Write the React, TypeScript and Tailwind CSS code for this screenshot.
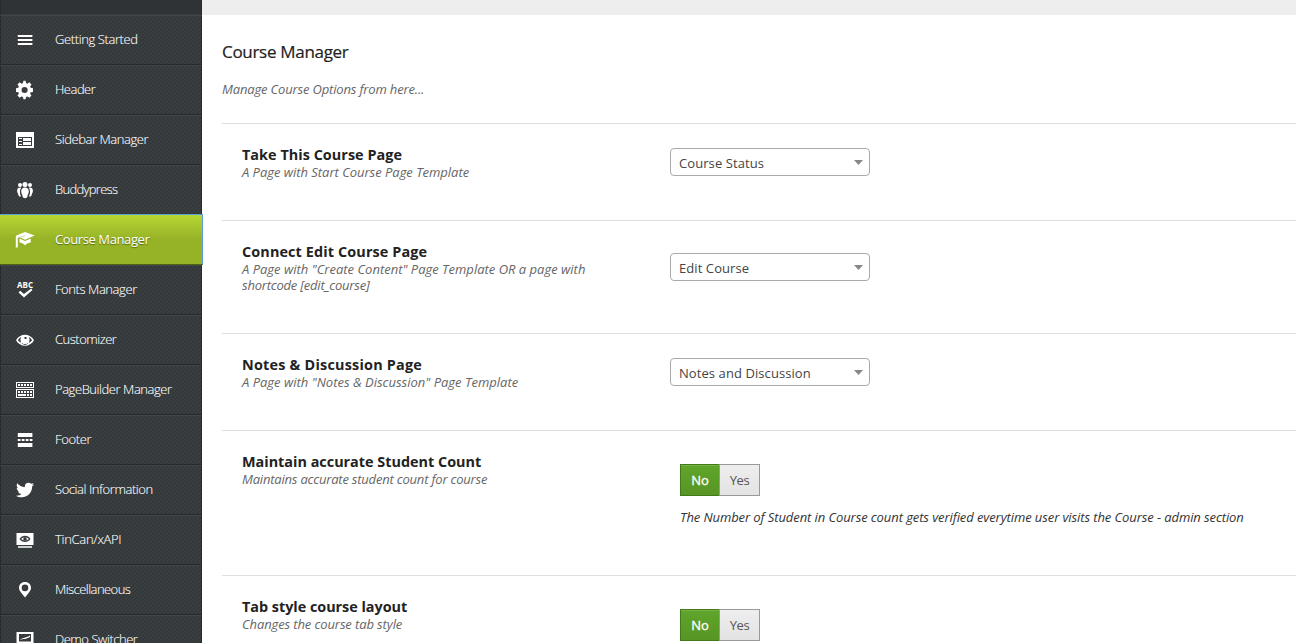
import React from "react";
import { FaTwitter } from "react-icons/fa";

const Svg = ({ children }: { children: React.ReactNode }) => (
  <svg viewBox="0 0 20 20" className="block h-5 w-5" fill="currentColor">
    {children}
  </svg>
);

const D = "#353a3d";

const icons: Record<string, React.ReactNode> = {
  menu: (
    <Svg>
      <path d="M2.800 5h14.600v2H2.800zM2.800 9h14.600v2H2.800zM2.800 13h14.600v2H2.800z" />
    </Svg>
  ),
  gear: (
    <Svg>
      <path
        fillRule="evenodd"
        d="M18 11.9V8.2l-2.3-.4-.6-1.4 1.4-1.9-2.2-2.2-1.9 1.4-1.4-.6-.4-2.3H8.4L8 3.1l-1.4.6-1.9-1.4-2.2 2.2 1.4 1.9-.6 1.4-2.3.4v3.7l2.3.4.6 1.4-1.4 1.900 2.200 2.200 1.900-1.400 1.400.6.4 2.300h2.200l.4-2.300 1.400-.6 1.900 1.400 2.200-2.200-1.400-1.900.6-1.400zM9.600 13.100a3 3 0 1 1 0-6.100 3 3 0 0 1 0 6.100z"
      />
    </Svg>
  ),
  sidebar: (
    <Svg>
      <path fillRule="evenodd" d="M1 2h18v16H1zM3 7v9h14V7z" />
      <path d="M4 8h3v1H4zM4 11h3v1H4zM4 14h3v1H4zM8 8h8v3H8zM8 12h8v3H8z" />
    </Svg>
  ),
  people: (
    <Svg>
      <circle cx="5" cy="5" r="2" />
      <circle cx="15" cy="5" r="2" />
      <circle cx="10" cy="4.6" r="2.5" />
      <path d="M5 7.4c-2 0-3 1.5-2.9 3.3.1 2 .8 2.7 1.2 4 .2 1.2 1 1.9 2.2 1.9l.6-.2C4.500 13.500 4.500 10 6.200 7.700zM15 7.400c2 0 3 1.500 2.900 3.300-.1 2-.8 2.700-1.200 4-.2 1.200-1 1.900-2.200 1.900l-.6-.2c1.600-2.900 1.600-6.400-.1-8.700z" />
      <path d="M10 7.500c-2.700 0-3.900 1.900-3.800 4.100.1 2.300 1.100 2.700 1.300 4.400.2 1.500 1.200 2.200 2.500 2.200s2.300-.7 2.500-2.200c.2-1.700 1.200-2.100 1.300-4.400.1-2.200-1.100-4.100-3.800-4.100z" />
    </Svg>
  ),
  course: (
    <Svg>
      <path d="M10 2 19.700 5.400 10 9.800 4.300 7.300 2.800 7.700v9.800H.8V7.300L1.200 5.600z" />
      <path d="M4.500 8.500 10 11l5.700-2.500v4.100C14 12.700 12 13.500 10 15.200 8 13.500 6.500 12.800 4.500 12.600z" />
      <path d="m4.500 7.300 5.500-1.400" stroke="#b4c46e" strokeWidth=".6" />
    </Svg>
  ),
  fonts: (
    <Svg>
      <text x="10" y="8" textAnchor="middle" className="font-['Open_Sans'] text-[8px] font-bold" textLength="16">
        ABC
      </text>
      <path d="m3.500 12.500 1.700-1.700 3.700 3.200 7.300-5.600 1.300 1.600L9 17.500z" />
    </Svg>
  ),
  eye: (
    <Svg>
      <path
        fillRule="evenodd"
        d="M1 10.200C5 2.800 15 2.800 19 10.200c-4 7.300-14 7.300-18 0zm2 0c3 4.600 11 4.600 14 0-1-1.600-2-2.500-3.300-3.200a5 5 0 0 1-3.700 8 5 5 0 0 1-3.700-8C5 7.700 3.900 8.600 3 10.200z"
      />
      <circle cx="10" cy="9.700" r="4.200" />
      <rect x="9.500" y="7" width="2" height="2" fill={D} />
    </Svg>
  ),
  builder: (
    <Svg>
      <path fillRule="evenodd" d="M1 2h18v6H1zM2 3v4h16V3zM1 9h18v9H1zM2 10v7h16v-7z" />
      <path d="M3 4h2v2H3zM6 4h2v2H6zM9 4h2v2H9zM12 4h2v2h-2zM15 4h2v2h-2zM3 11h2v2H3zM6 11h2v2H6zM9 11h2v2H9zM12 11h2v2h-2zM15 11h2v2h-2zM3 14h8v2H3zM12 14h2v2h-2zM15 14h2v2h-2z" />
    </Svg>
  ),
  footer: (
    <Svg>
      <path d="M2.800 3h14.600v4H2.800zM2.800 9h2.700v2H2.800zM6.700 9h2.800v2H6.700zM10.700 9h2.800v2h-2.800zM14.700 9h2.700v2h-2.700zM2.800 13h14.600v4H2.800z" />
    </Svg>
  ),
  twitter: <FaTwitter className="mt-px ml-px h-[18px] w-[18px]" />,
  tincan: (
    <Svg>
      <path d="M1.500 3h17v12h-17zM3 16.200h14v1.600H3z" />
      <path d="M4.500 9C7 4.800 13 4.800 15.500 9c-2.500 4-8.500 4-11 0z" fill={D} />
      <path d="M6.200 9c1.200-1.900 6.400-1.900 7.600 0-1.200 1.900-6.400 1.900-7.600 0z" />
      <circle cx="10" cy="9" r="1.800" fill={D} />
    </Svg>
  ),
  pin: (
    <Svg>
      <path
        fillRule="evenodd"
        d="M10 2C6.200 2 4 4.700 4 7.800c0 1.800.8 3.100 2 4.700l4 5 4-5c1.200-1.600 2-2.900 2-4.700C16 4.700 13.800 2 10 2zm0 9.200a3.300 3.300 0 1 1 0-6.600 3.300 3.300 0 0 1 0 6.600z"
      />
    </Svg>
  ),
  demo: (
    <Svg>
      <path fillRule="evenodd" d="M1.500 2h17v13h-17zM4 4v7.500h12V4z" />
      <path d="M5 10C7 7.500 10 8.500 15 5.500V7C11 9.500 8 8.500 5 10zM4 17h12v1H4z" />
    </Svg>
  ),
};

const nav = [
  { icon: "menu", label: "Getting Started", track: "tracking-[-0.4px]" },
  { icon: "gear", label: "Header", track: "tracking-[-0.5px]" },
  { icon: "sidebar", label: "Sidebar Manager", track: "tracking-[-0.43px]" },
  { icon: "people", label: "Buddypress", track: "tracking-[-0.7px]" },
  { icon: "course", label: "Course Manager", track: "tracking-[-0.4px]", active: true },
  { icon: "fonts", label: "Fonts Manager", track: "tracking-[-0.42px]" },
  { icon: "eye", label: "Customizer", track: "tracking-[-0.5px]" },
  { icon: "builder", label: "PageBuilder Manager", track: "tracking-[-0.44px]" },
  { icon: "footer", label: "Footer", track: "tracking-[-0.35px]" },
  { icon: "twitter", label: "Social Information", track: "tracking-[-0.43px]" },
  { icon: "tincan", label: "TinCan/xAPI", track: "tracking-[-0.3px]" },
  { icon: "pin", label: "Miscellaneous", track: "tracking-[-0.55px]" },
  { icon: "demo", label: "Demo Switcher", track: "tracking-[-0.48px]" },
];

function NavItem({ item }: { item: (typeof nav)[number] }) {
  return (
    <a
      className={
        item.active
          ? "z-10 -mt-px flex h-[51px] w-[203px] shrink-0 items-center border-t border-r border-b border-t-[#5b9dd9] border-r-[#5b9dd9] border-b-[#4f6213] bg-[linear-gradient(to_bottom,#b7d733_0%,#96b227_50%,#96b227_100%)] pl-[15px] font-normal text-white [text-shadow:0_1px_1px_#566b12]"
          : "flex h-[50px] w-[202px] shrink-0 items-center border border-t-[#414649] border-r-[#272b2d] border-b-[#25292b] border-l-[#272b2d] pl-[14px] font-light text-white [-webkit-text-stroke:0.1px_#fff]"
      }
    >
      <span className="h-5 w-5 shrink-0 [-webkit-text-stroke:0]">{icons[item.icon]}</span>
      <span className={"mb-[2px] ml-5 text-[13px] leading-5 whitespace-nowrap " + item.track}>{item.label}</span>
    </a>
  );
}

function Select({ value }: { value: string }) {
  return (
    <div className="flex h-7 w-[200px] items-center justify-between rounded-[4px] border border-[#aaa] bg-white pr-[6px] pl-2 text-[13px] leading-5 tracking-[0.08px] text-[#444]">
      <span className="pt-px">{value}</span>
      <svg width="9" height="5" viewBox="0 0 9 5">
        <path d="M0 0h9L4.500 5z" fill="#888" />
      </svg>
    </div>
  );
}

function Toggle() {
  return (
    <div className="flex h-8 w-20 text-[13px] leading-[31px]">
      <div className="w-[39px] border border-r-0 border-[#437a19] bg-[linear-gradient(to_bottom,#5fa52b,#579524)] text-center font-medium text-white shadow-[inset_0_1px_0_#77b14a] [-webkit-text-stroke:0.3px_#fff]">
        No
      </div>
      <div className="w-[41px] border border-[#999] bg-[linear-gradient(to_bottom,#eee,#e3e3e3)] text-center tracking-[-0.4px] text-[#555]">Yes</div>
    </div>
  );
}

type RowProps = {
  title: string;
  titleTrack: string;
  desc: React.ReactNode;
  descTrack?: string;
  height: string;
  children: React.ReactNode;
};

function Row({ title, titleTrack, desc, descTrack = "", height, children }: RowProps) {
  return (
    <section className={"flex shrink-0 border-t border-[#dfdfdf] pl-5 " + height}>
      <div className="w-[428px] shrink-0 pt-[22px]">
        <h4 className={"text-[14.4px] leading-[18px] font-bold text-[#222] " + titleTrack}>{title}</h4>
        <p className={"text-[13px] leading-4 whitespace-nowrap text-[#666] italic " + descTrack}>{desc}</p>
      </div>
      {children}
    </section>
  );
}

export default function App() {
  return (
    <div className="flex h-[643px] w-[1296px] overflow-hidden bg-white font-['Open_Sans','Noto_Sans',sans-serif]">
      <nav className="flex w-[202px] shrink-0 flex-col bg-[repeating-linear-gradient(135deg,#3b3f41_0px,#3b3f41_1.414px,#323739_1.414px,#323739_2.828px)]">
        <div className="h-[15px] w-[202px] shrink-0 border-r border-b border-l border-[#272b2d] border-b-[#383d40] bg-[#2f3336]" />
        {nav.map((item) => (
          <NavItem key={item.label} item={item} />
        ))}
      </nav>
      <main className="flex min-w-0 flex-1 flex-col">
        <div className="h-[15px] shrink-0 bg-[#eee]" />
        <div className="flex flex-1 flex-col pl-5">
          <header className="h-[108px] shrink-0 pt-[25px]">
            <h3 className="text-[17px] leading-6 font-medium tracking-[-0.3px] text-[#222] [-webkit-text-stroke:0.2px_#222]">Course Manager</h3>
            <p className="mt-[15px] text-[13px] leading-5 tracking-[-0.16px] text-[#666] italic">Manage Course Options from here...</p>
          </header>
          <Row
            height="h-[97px]"
            title="Take This Course Page"
            titleTrack="tracking-[0.04px]"
            desc="A Page with Start Course Page Template"
            descTrack="tracking-[-0.03px]"
          >
            <div className="pt-6">
              <Select value="Course Status" />
            </div>
          </Row>
          <Row
            height="h-[113px]"
            title="Connect Edit Course Page"
            titleTrack="tracking-[0.12px]"
            desc={
              <>
                A Page with "Create Content" Page Template OR a page with
                <br />
                <span className="tracking-[-0.22px]">shortcode [edit_course]</span>
              </>
            }
          >
            <div className="pt-8">
              <Select value="Edit Course" />
            </div>
          </Row>
          <Row
            height="h-[97px]"
            title="Notes & Discussion Page"
            titleTrack="tracking-[0.22px]"
            desc={'A Page with "Notes & Discussion" Page Template'}
          >
            <div className="pt-6">
              <Select value="Notes and Discussion" />
            </div>
          </Row>
          <Row
            height="h-[145px]"
            title="Maintain accurate Student Count"
            titleTrack=""
            desc="Maintains accurate student count for course"
            descTrack="tracking-[-0.2px]"
          >
            <div className="pt-[33px] pl-[10px]">
              <Toggle />
              <p className="mt-[11px] text-[13px] leading-5 tracking-[-0.09px] whitespace-nowrap text-[#333] italic">
                The Number of Student in Course count gets verified everytime user visits the Course - admin section
              </p>
            </div>
          </Row>
          <Row
            height="h-[145px]"
            title="Tab style course layout"
            titleTrack="tracking-[-0.02px]"
            desc="Changes the course tab style"
            descTrack="tracking-[-0.11px]"
          >
            <div className="pt-[33px] pl-[10px]">
              <Toggle />
            </div>
          </Row>
        </div>
      </main>
    </div>
  );
}
